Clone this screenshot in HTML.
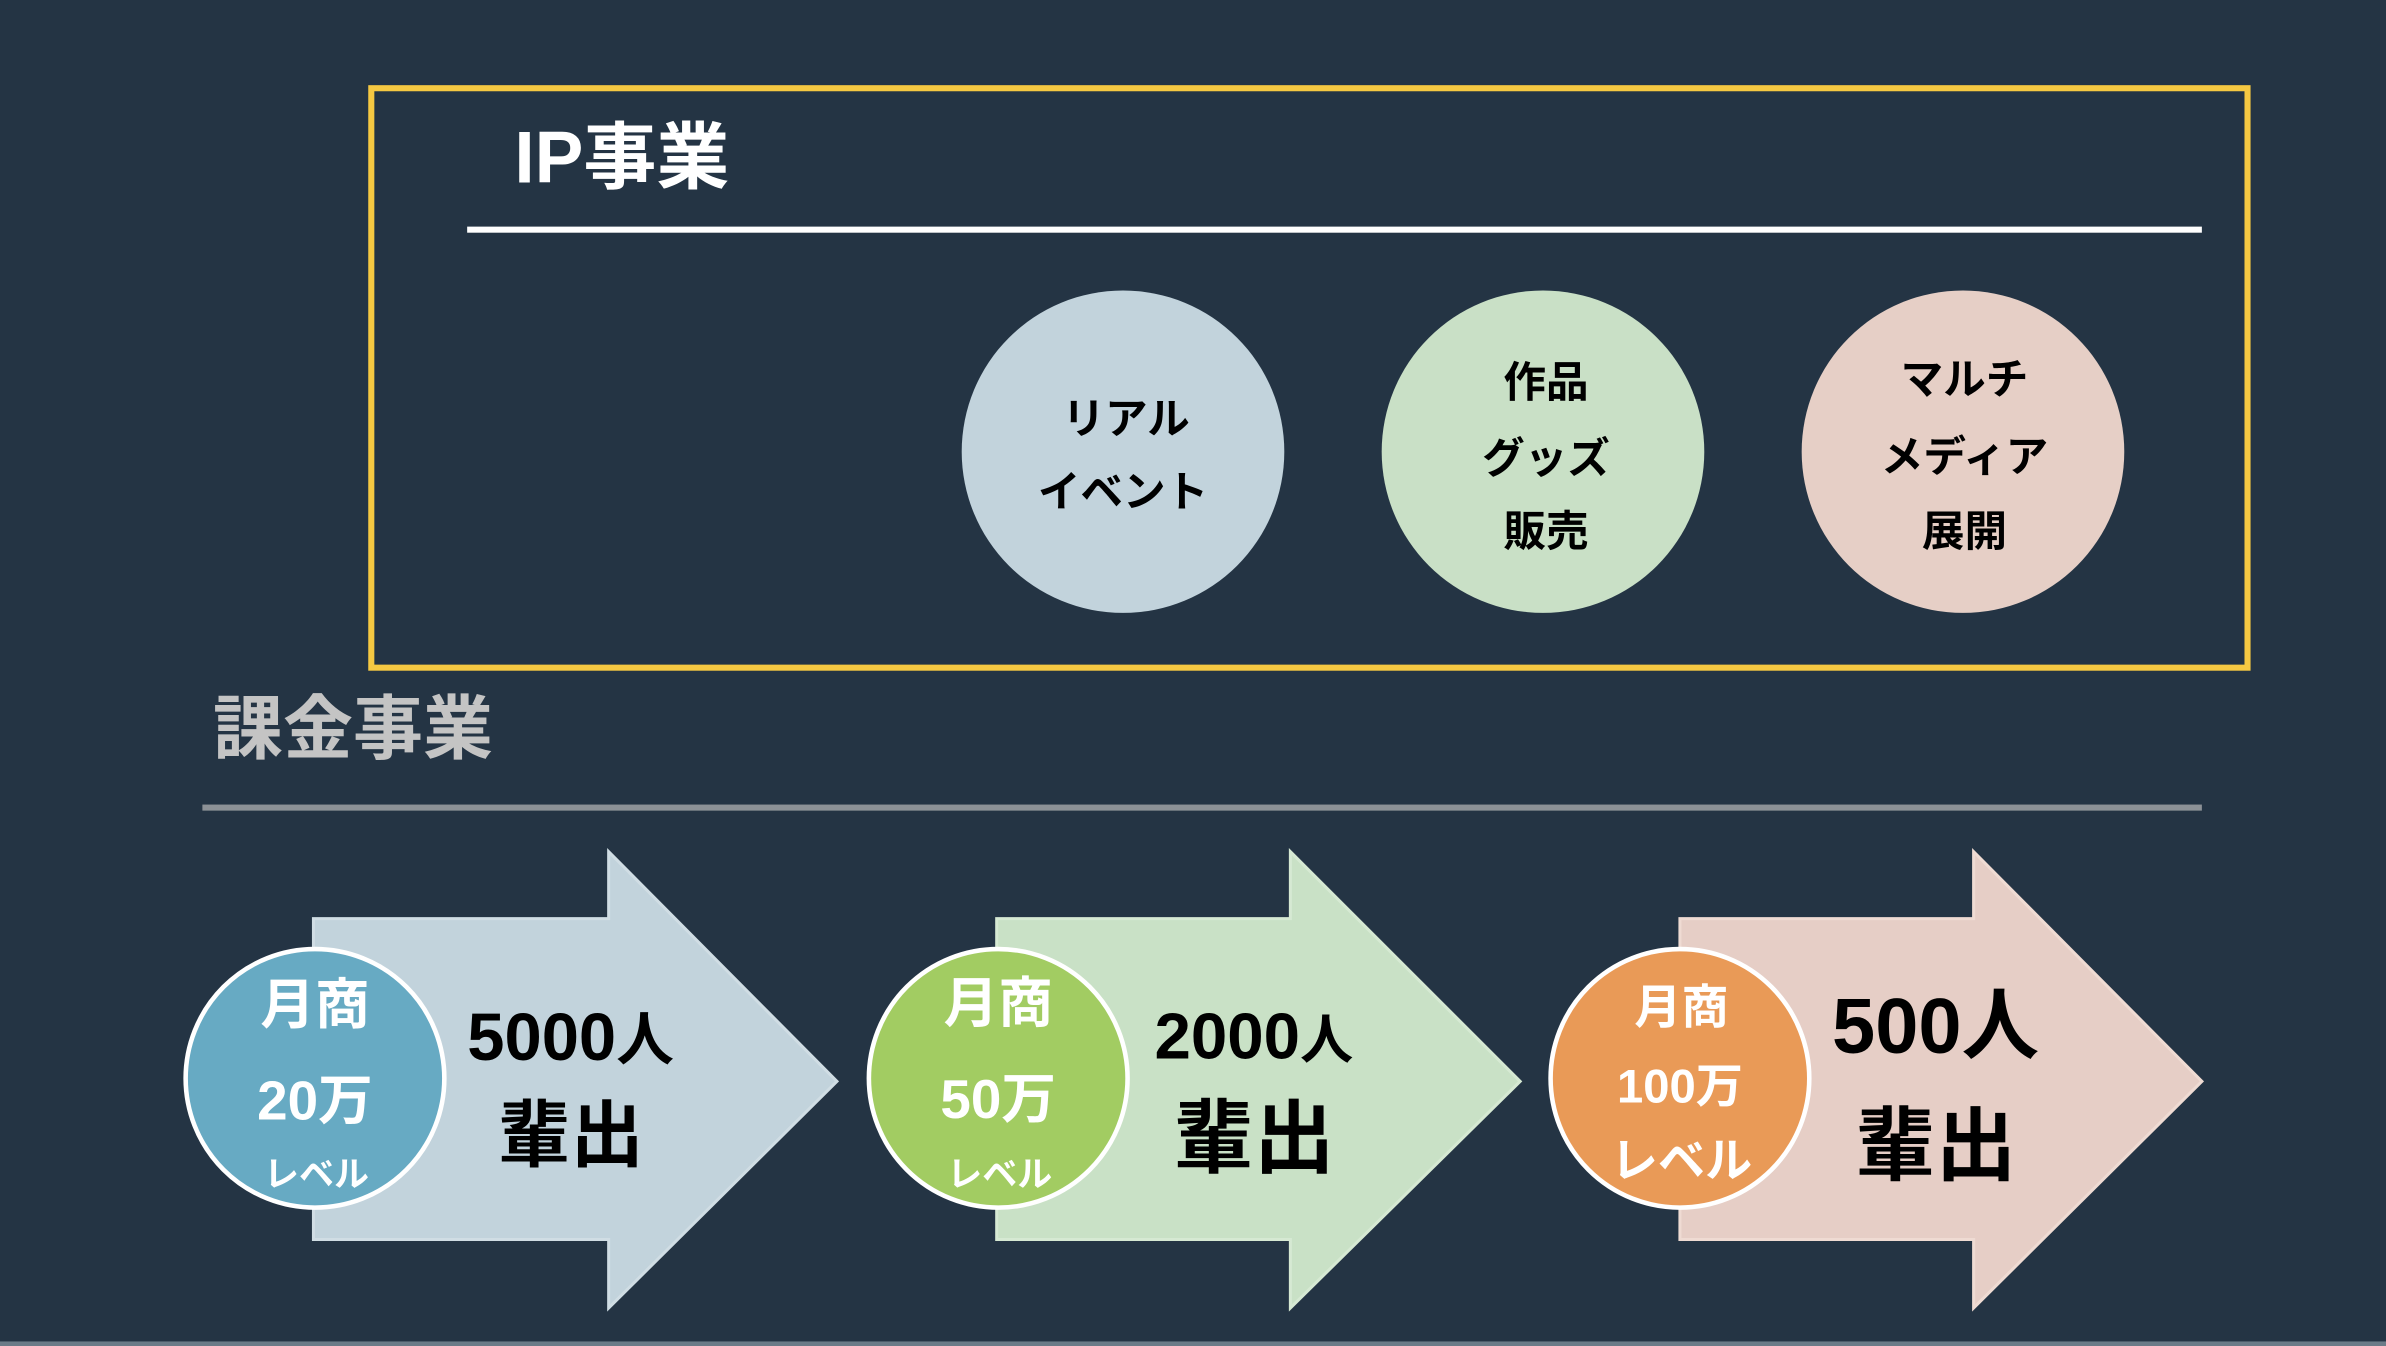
<!DOCTYPE html>
<html><head><meta charset="utf-8"><style>
html,body{margin:0;padding:0;background:#243444;}
svg{display:block}
text{font-family:"Liberation Sans","Noto Sans CJK JP",sans-serif;font-weight:bold;}
</style></head><body>
<svg width="2386" height="1346" viewBox="0 0 1568 885" preserveAspectRatio="none" xmlns="http://www.w3.org/2000/svg">
<rect width="1568" height="885" fill="#243444"/>
<rect x="0" y="882" width="1568" height="3" fill="#6b7b88"/>
<rect x="244" y="58" width="1233" height="381" fill="none" stroke="#f5c842" stroke-width="4"/>
<text x="338" y="120" font-size="48" fill="#fff">IP事業</text>
<rect x="307" y="149" width="1140" height="4" fill="#fff"/>
<circle cx="738" cy="297" r="106" fill="#c2d3dc"/>
<circle cx="1014" cy="297" r="106" fill="#c9e0c6"/>
<circle cx="1290" cy="297" r="106" fill="#e6cfc6"/>
<g font-size="28" fill="#000" text-anchor="middle">
<text x="740" y="285">リアル</text><text x="738" y="333">イベント</text>
<text x="1016" y="261">作品</text><text x="1016" y="311">グッズ</text><text x="1016" y="359">販売</text>
<text x="1291" y="259">マルチ</text><text x="1291" y="310">メディア</text><text x="1291" y="359">展開</text>
</g>
<text x="140" y="495" font-size="46" fill="#c4c4c4">課金事業</text>
<rect x="133" y="529" width="1314" height="4" fill="#8c9196"/>
<polygon points="206,604 400,604 400,560 550,711 400,860 400,815 206,815" fill="#c2d3dc" stroke="#d0dde4" stroke-width="2"/>
<polygon points="655,604 848,604 848,560 999,711 848,860 848,815 655,815" fill="#c9e1c6" stroke="#d6e9d3" stroke-width="2"/>
<polygon points="1104,604 1297,604 1297,560 1447,711 1297,860 1297,815 1104,815" fill="#e6cec6" stroke="#efdbd3" stroke-width="2"/>
<circle cx="207" cy="709" r="85" fill="#67aac3" stroke="#fff" stroke-width="3"/>
<circle cx="656" cy="709" r="85" fill="#a2cc62" stroke="#fff" stroke-width="3"/>
<circle cx="1104" cy="709" r="85" fill="#e99a57" stroke="#fff" stroke-width="3"/>
<g fill="#fff" text-anchor="middle">
<text x="207" y="673" font-size="36">月商</text><text x="207" y="736" font-size="36">20万</text><text x="208" y="780" font-size="23">レベル</text>
<text x="656" y="672" font-size="36">月商</text><text x="656" y="735" font-size="36">50万</text><text x="657" y="780" font-size="23">レベル</text>
<text x="1105" y="673" font-size="31">月商</text><text x="1104" y="725" font-size="31">100万</text><text x="1105" y="774" font-size="31">レベル</text>
</g>
<g fill="#000" text-anchor="middle">
<text x="375" y="697" font-size="44">5000<tspan font-size="38">人</tspan></text>
<text x="375" y="763" font-size="48">輩出</text>
<text x="824" y="696" font-size="43">2000<tspan font-size="35">人</tspan></text>
<text x="824" y="767" font-size="53">輩出</text>
<text x="1272" y="692" font-size="51">500人</text>
<text x="1272" y="772" font-size="53">輩出</text>
</g>
</svg>
</body></html>
